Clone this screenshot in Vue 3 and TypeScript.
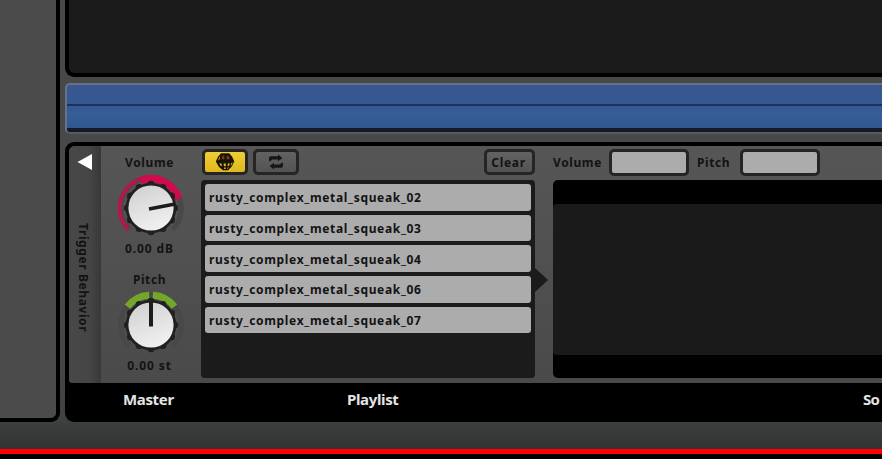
<script setup lang="ts">
interface Knob {
  label: string
  value: string
  kind: 'volume' | 'pitch'
}

const knobs: Knob[] = [
  { label: 'Volume', value: '0.00 dB', kind: 'volume' },
  { label: 'Pitch', value: '0.00 st', kind: 'pitch' },
]

const playlist: string[] = ['02', '03', '04', '06', '07'].map(
  (n) => `rusty_complex_metal_squeak_${n}`,
)

// Twelve evenly spaced bumps around the rim of a knob.
const bumps = Array.from({ length: 12 }, (_, i) => {
  const a = (i * Math.PI) / 6
  return { x: 35 + Math.sin(a) * 23.6, y: 35 - Math.cos(a) * 23.6 }
})
</script>

<template>
  <div class="window">
    <div class="workspace">
      <aside class="browser"></aside>
      <main class="editor">
        <section class="tracks"></section>
        <section class="region"><div class="region-line"></div><div class="region-foot"></div></section>
        <section class="deck">
          <div class="deck-body">
            <div class="strip">
              <svg class="collapse" width="16" height="18" viewBox="0 0 16 18"><path d="M0.5 9 15 1V17Z" fill="#fff" /></svg>
              <span class="strip-title">Trigger Behavior</span>
            </div>
            <div class="master">
              <div v-for="k in knobs" :key="k.kind" class="knob" :class="k.kind">
                <span class="label">{{ k.label }}</span>
                <svg width="70" height="70" viewBox="0 0 70 70">
                  <defs>
                    <linearGradient :id="`face-${k.kind}`" x1="0.3" y1="0" x2="0.7" y2="1">
                      <stop offset="0" stop-color="#d2d2d2" />
                      <stop offset="1" stop-color="#f2f2f2" />
                    </linearGradient>
                  </defs>
                  <path d="M13.5 56.5A30.4 30.4 0 1 1 56.5 56.5" fill="none" stroke="#48484a" stroke-width="5" />
                  <template v-if="k.kind === 'volume'">
                    <path d="M12.6 57A31 31 0 0 1 25 5.7" fill="none" stroke="#b4174b" stroke-width="3.8" />
                    <path d="M24.6 7.6A29.3 29.3 0 0 1 62.8 26" fill="none" stroke="#cf0b4f" stroke-width="7.5" />
                  </template>
                  <template v-else>
                    <path d="M11.5 16.6A29.7 29.7 0 0 1 33.2 5.3" fill="none" stroke="#72a729" stroke-width="7" />
                    <path d="M36.8 5.3A29.7 29.7 0 0 1 58.5 16.6" fill="none" stroke="#72a729" stroke-width="7" />
                  </template>
                  <circle cx="35" cy="35" r="25.3" fill="#202020" />
                  <circle v-for="(b, i) in bumps" :key="i" :cx="b.x" :cy="b.y" r="3.6" fill="#202020" />
                  <circle cx="35" cy="35" r="22.6" :fill="`url(#face-${k.kind})`" />
                  <path v-if="k.kind === 'volume'" d="M33 36 59 31" stroke="#1c1c1c" stroke-width="3.8" />
                  <path v-else d="M35 36.5V11" stroke="#1c1c1c" stroke-width="4" />
                </svg>
                <span class="label">{{ k.value }}</span>
              </div>
            </div>
            <div class="playlist">
              <div class="toolbar">
                <button class="btn dice" aria-label="Randomize">
                  <svg width="20" height="20" viewBox="0 0 20 20">
                    <path d="M6 1.2h8.2L17 4.4l2.3 5.2-2.7 5.2-3.6 3.4h-5l-4-3.2L.8 9.6 3.2 4.4Z" fill="#191304" />
                    <path d="M7.4 3.8h2v3.4H6.6ZM11.6 4h2.2l.8 3.2h-3Z" fill="#7d3a14" />
                    <path d="M4.3 5 5.3 4.2 4.6 7.6 2.9 8.4Z" fill="#c99c19" />
                    <path d="M4.4 11.2l2.1.3.5 2.4-1.4-.2ZM8.6 11.6h2.2v2.6H8.9ZM12.8 11.6l2-.3-.6 2.5-1.6.4ZM16.5 10.8l1.2-.4-1.4 3-.7.2ZM9 15.6h1.7v1.5H9.2ZM12.5 15.6l1.2-.3-.9 1.5h-.6Z" fill="#e4b91b" />
                  </svg>
                </button>
                <button class="btn" aria-label="Loop">
                  <svg width="18" height="16" viewBox="0 0 18 16" fill="#161616">
                    <path d="M2 7.2V4.2Q2 2.2 4 2.2h7V.6L15.5 4 11 7.2V5.4H5.4L3.2 7.2Z" />
                    <path d="M16 8.8v3q0 2-2 2H7v1.6L2.5 12 7 8.8v1.8h5.6l2.2-1.8Z" />
                  </svg>
                </button>
                <button class="btn clear">Clear</button>
              </div>
              <ul class="list">
                <li v-for="name in playlist" :key="name">{{ name }}</li>
              </ul>
              <svg class="pointer" width="16" height="24" viewBox="0 0 16 24"><path d="M0 0H2L15 12 2 24H0Z" fill="#1b1b1b" /></svg>
            </div>
            <div class="sound">
              <div class="fields">
                <span class="label">Volume</span><span class="field"></span>
                <span class="label second">Pitch</span><span class="field"></span>
              </div>
              <div class="wave"><div class="wave-view"></div></div>
            </div>
          </div>
          <footer class="captions">
            <span class="cap-master">Master</span>
            <span class="cap-playlist">Playlist</span>
            <span class="cap-sound">So</span>
          </footer>
        </section>
      </main>
    </div>
    <div class="alert"></div>
  </div>
</template>

<style>
body { background: #000; overflow: hidden; }
</style>

<style scoped>
* { box-sizing: border-box; }
.window {
  width: 882px; height: 459px; overflow: hidden; background: #000;
  font-family: "Noto Sans", "Open Sans", sans-serif; font-weight: 700; color: #131313;
}
.workspace {
  height: 449px; display: flex; gap: 5px;
  background: linear-gradient(#484848 0, #484848 300px, #414242 415px, #303332 449px);
}
.browser {
  width: 60px; height: 422px; flex: none; border: solid #000; border-width: 0 4px 4px 0;
  border-radius: 0 0 9px 0; background: #4b4b4b;
}
.editor { flex: 1; min-width: 0; display: flex; flex-direction: column; }
.tracks {
  height: 77px; flex: none; border: solid #000; border-width: 0 0 4px 4px;
  border-radius: 0 0 0 9px; background: #1b1b1b;
}
.region {
  height: 51px; margin-top: 6px; flex: none; display: flex; flex-direction: column; justify-content: space-between;
  border: 2px solid #65738a; border-bottom-color: #555b62; border-right: 0; border-radius: 5px 0 0 5px;
  background: linear-gradient(#38578e, #355992 24px, #365e97 28px, #31558e); overflow: hidden;
}
.region-line { height: 2px; margin-top: 19px; background: #1b315c; }
.region-foot { height: 4px; background: #141a26; }
.deck {
  height: 280px; margin-top: 8px; flex: none; padding: 4px 0 0 4px; background: #000;
  border-radius: 9px 0 0 9px; overflow: hidden;
}
.deck-body {
  height: 237px; display: flex; background: linear-gradient(#565656, #4a4a4a);
  border-radius: 6px 0 0 4px; overflow: hidden;
}
.strip {
  width: 32px; flex: none; display: flex; flex-direction: column; align-items: center;
  background: linear-gradient(90deg, #484848, #454545 65%, #383838);
}
.collapse { display: block; margin-top: 7px; }
.strip-title {
  margin-top: 52px; margin-right: 5px; writing-mode: vertical-rl; line-height: 16px;
  font-size: 12px; letter-spacing: 0.6px; white-space: nowrap;
}
.master { width: 100px; flex: none; padding-top: 8px; }
.knob { display: flex; flex-direction: column; align-items: center; height: 117.5px; padding-right: 3px; }
.knob svg { display: block; margin: 1px 0 -3px 2px; flex: none; }
.label { font-size: 12px; line-height: 18px; letter-spacing: 0.6px; white-space: nowrap; }
.knob .label:last-child { letter-spacing: 0.9px; }
.knob.pitch { margin-top: -0.5px; }
.playlist { width: 334px; flex: none; position: relative; }
.toolbar { display: flex; gap: 5px; padding: 3px 0 5px 1px; }
.btn {
  width: 46px; height: 26px; padding: 0; display: flex; align-items: center; justify-content: center;
  border: 3px solid #252523; border-radius: 5px; background: linear-gradient(#626262, #535353);
  font: inherit; font-size: 12px; letter-spacing: 0.7px; color: #131313;
}
.btn.dice { background: linear-gradient(#efcf36, #e0b81c); }
.btn.clear { width: 51px; margin-left: auto; padding: 1px 2px 0 0; }
.list {
  height: 198px; margin: 0; padding: 4px; list-style: none; display: flex; flex-direction: column; gap: 4px;
  background: #1b1b1b; border-radius: 4px;
}
.list li {
  height: 26.7px; flex: none; padding: 1px 0 0 4px; display: flex; align-items: center; border-radius: 3px;
  background: #acacac; font-size: 12px; letter-spacing: 0.67px; white-space: nowrap;
}
.pointer { position: absolute; left: 332px; top: 122px; }
.sound { flex: 1; min-width: 0; margin-left: 18px; }
.fields { height: 34px; padding: 3px 0 5px; display: flex; align-items: center; }
.fields .label { width: 56px; padding-top: 2px; }
.fields .label.second { width: 43px; margin-left: 8px; }
.field {
  width: 80px; height: 27px; flex: none; border: 3px solid #252525; border-radius: 5px; background: #acacac;
}
.wave { height: 198px; padding: 24px 0 23px; background: #000; border-radius: 5px 0 0 5px; }
.wave-view { height: 151px; background: #1a1a1a; border-radius: 4px 0 0 4px; }
.captions { height: 39px; display: flex; color: #e4e4e4; font-size: 15px; line-height: 32px; white-space: nowrap; }
.captions { letter-spacing: -0.35px; }
.cap-master { width: 224px; padding-left: 54px; flex: none; }
.cap-playlist { width: 516px; padding-left: 54px; flex: none; }
.cap-sound { padding-left: 54px; flex: none; letter-spacing: -0.7px; }
.alert { height: 5px; background: #f00; }
</style>
